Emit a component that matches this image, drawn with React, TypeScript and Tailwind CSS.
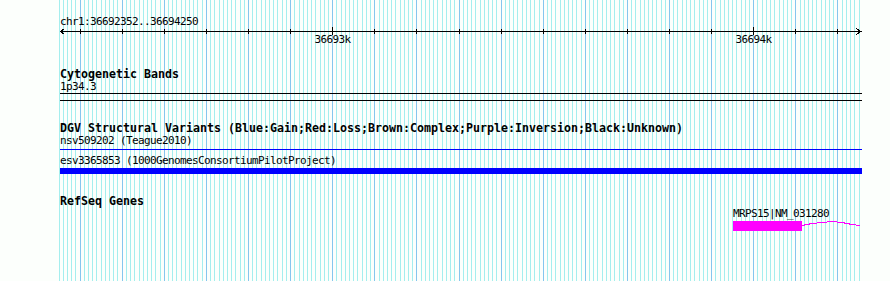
import React from "react";

const START = 36692350;
const PX = 800 / 1900; // px per bp
const xOf = (bp: number) => 59 + (bp - START) * PX;

function Grid() {
  const lines = [];
  for (let i = 0; i <= 190; i++) {
    const bp = START + i * 10;
    const x = Math.floor(xOf(bp));
    const major = bp % 100 === 0;
    lines.push(
      <rect key={i} x={x} y={0} width={1} height={281} fill={major ? "#86c6ee" : "#a4eeee"} />
    );
  }
  return (
    <svg className="absolute inset-0" width={890} height={281} shapeRendering="crispEdges">
      {lines}
    </svg>
  );
}

function Ruler() {
  const ticks = [];
  for (let bp = 36692400; bp <= 36694200; bp += 100) {
    const x = Math.floor(xOf(bp)) - 60;
    const labeled = bp % 1000 === 0;
    ticks.push(
      <rect key={bp} x={x} y={labeled ? -1 : 1} width={1} height={labeled ? 8 : 5} fill="#000" />
    );
  }
  const labels = [36693000, 36694000];
  return (
    <div className="relative h-[20px] w-[802px]">
      <svg width={802} height={20} className="block overflow-visible" shapeRendering="crispEdges">
        <rect x={0} y={3} width={802} height={1} fill="#000" />
        {ticks}
        <polyline points="4.5,0.5 0.5,3.5 4.5,6.5" fill="none" stroke="#000" strokeWidth={1} />
        <polyline points="796.5,0.5 800.5,3.5 796.5,6.5" fill="none" stroke="#000" strokeWidth={1} />
      </svg>
      {labels.map((bp) => (
        <div
          key={bp}
          className="absolute top-[5px] text-[11px] tracking-[-0.62px] leading-[13px] -translate-x-1/2"
          style={{ left: Math.floor(xOf(bp)) - 60 + 0.5 }}
        >
          {bp / 1000}k
        </div>
      ))}
    </div>
  );
}

const small = "h-[13px] text-[11px] tracking-[-0.62px] leading-[13px] whitespace-nowrap";
const bold = "h-[12px] text-[11.63px] leading-[13px] font-bold whitespace-nowrap";

export default function App() {
  return (
    <div className="relative w-[890px] h-[281px] overflow-hidden bg-[#fcfffc] text-black font-['DejaVu_Sans_Mono',monospace]">
      <Grid />
      <div className="relative flex flex-col pl-[60px] pt-[15px] w-[862px]">
        <div className={small}>chr1:36692352..36694250</div>
        <Ruler />

        <div className={"mt-[20px] " + bold}>Cytogenetic Bands</div>
        <div className={small}>1p34.3</div>
        <div className="h-[8px] border-y border-black w-[802px]" />

        <div className={"mt-[21px] " + bold}>
          DGV Structural Variants (Blue:Gain;Red:Loss;Brown:Complex;Purple:Inversion;Black:Unknown)
        </div>
        <div className={small}>nsv509202 (Teague2010)</div>
        <div className="mt-[2px] h-[1px] bg-[#0000ff] w-[802px]" />
        <div className={"mt-[4px] " + small}>esv3365853 (1000GenomesConsortiumPilotProject)</div>
        <div className="mt-[1px] h-[6px] bg-[#0000ff] w-[802px]" />

        <div className={"mt-[21px] " + bold}>RefSeq Genes</div>
        <div className={"ml-[673px] " + small}>MRPS15|NM_031280</div>
        <div className="ml-[673px] mt-[1px] flex items-start">
          <div className="w-[70px] h-[10px] bg-[#ff00ff]" />
          <svg width={60} height={10} className="block" shapeRendering="crispEdges">
            <polyline points="0,4.5 10,2.5 20,1.5 30,0.5 40,1.5 50,3.5 58,4.5" fill="none" stroke="#ff00ff" strokeWidth={1} />
          </svg>
        </div>
      </div>
    </div>
  );
}
